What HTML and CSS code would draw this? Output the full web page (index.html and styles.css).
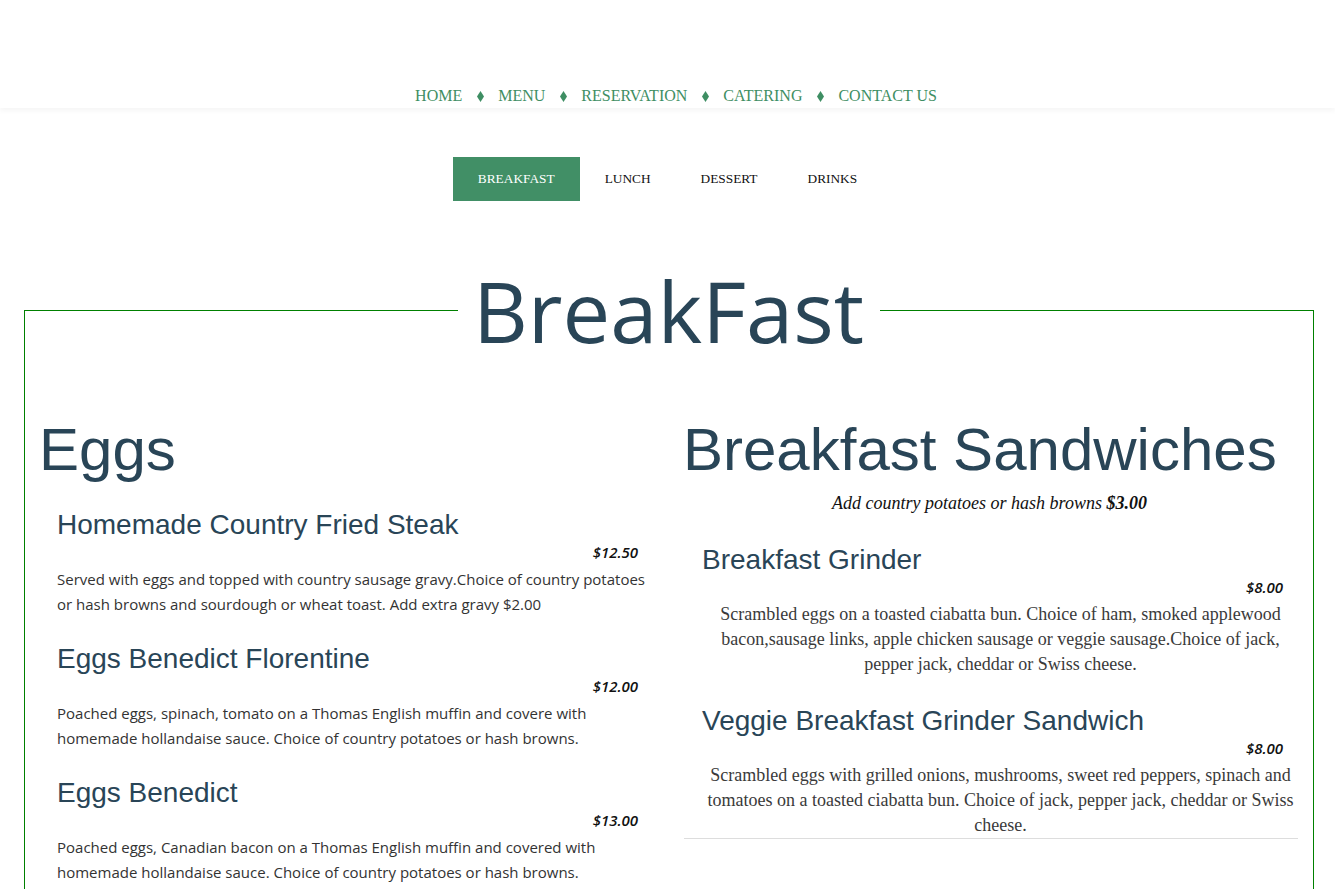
FILE: index.html
```html
<!DOCTYPE html>
<html lang="en">
<head>
<meta charset="utf-8">
<title>Menu - BreakFast</title>
<link rel="stylesheet" href="styles.css">
</head>
<body>
<header class="site-header">
  <nav class="main-nav">
    <a href="#" class="nav-link">HOME</a>
    <span class="nav-sep"><svg width="7" height="11" viewBox="0 0 7 11"><polygon points="3.5,0 7,5.5 3.5,11 0,5.5" fill="#3e8e63"/></svg></span>
    <a href="#" class="nav-link">MENU</a>
    <span class="nav-sep"><svg width="7" height="11" viewBox="0 0 7 11"><polygon points="3.5,0 7,5.5 3.5,11 0,5.5" fill="#3e8e63"/></svg></span>
    <a href="#" class="nav-link">RESERVATION</a>
    <span class="nav-sep"><svg width="7" height="11" viewBox="0 0 7 11"><polygon points="3.5,0 7,5.5 3.5,11 0,5.5" fill="#3e8e63"/></svg></span>
    <a href="#" class="nav-link">CATERING</a>
    <span class="nav-sep"><svg width="7" height="11" viewBox="0 0 7 11"><polygon points="3.5,0 7,5.5 3.5,11 0,5.5" fill="#3e8e63"/></svg></span>
    <a href="#" class="nav-link">CONTACT US</a>
  </nav>
</header>

<div class="tabs">
  <a href="#" class="tab active">BREAKFAST</a>
  <a href="#" class="tab">LUNCH</a>
  <a href="#" class="tab">DESSERT</a>
  <a href="#" class="tab">DRINKS</a>
</div>

<fieldset class="menu-box">
  <legend class="menu-title">BreakFast</legend>
  <div class="menu-cols">
    <section class="menu-col left">
      <h2 class="col-title">Eggs</h2>
      <div class="item first">
        <h3 class="item-name">Homemade Country Fried Steak</h3>
        <p class="price">$12.50</p>
        <p class="desc">Served with eggs and topped with country sausage gravy.Choice of country potatoes or hash browns and sourdough or wheat toast. Add extra gravy $2.00</p>
      </div>
      <div class="item">
        <h3 class="item-name">Eggs Benedict Florentine</h3>
        <p class="price">$12.00</p>
        <p class="desc">Poached eggs, spinach, tomato on a Thomas English muffin and covere with homemade hollandaise sauce. Choice of country potatoes or hash browns.</p>
      </div>
      <div class="item">
        <h3 class="item-name">Eggs Benedict</h3>
        <p class="price">$13.00</p>
        <p class="desc">Poached eggs, Canadian bacon on a Thomas English muffin and covered with homemade hollandaise sauce. Choice of country potatoes or hash browns.</p>
      </div>
    </section>
    <section class="menu-col right">
      <h2 class="col-title">Breakfast Sandwiches</h2>
      <p class="col-note">Add country potatoes or hash browns <b>$3.00</b></p>
      <div class="item">
        <h3 class="item-name">Breakfast Grinder</h3>
        <p class="price">$8.00</p>
        <p class="desc serif">Scrambled eggs on a toasted ciabatta bun. Choice of ham, smoked applewood bacon,sausage links, apple chicken sausage or veggie sausage.Choice of jack, pepper jack, cheddar or Swiss cheese.</p>
      </div>
      <div class="item">
        <h3 class="item-name">Veggie Breakfast Grinder Sandwich</h3>
        <p class="price">$8.00</p>
        <p class="desc serif">Scrambled eggs with grilled onions, mushrooms, sweet red peppers, spinach and tomatoes on a toasted ciabatta bun. Choice of jack, pepper jack, cheddar or Swiss cheese.</p>
      </div>
      <hr class="col-rule">
    </section>
  </div>
</fieldset>
</body>
</html>
```

FILE: styles.css
```css
html, body {
  margin: 0;
  padding: 0;
  background: #fff;
}

body {
  font-family: "Liberation Serif", "Times New Roman", serif;
  color: #333;
}

.site-header {
  height: 108px;
  box-sizing: border-box;
  padding-top: 84px;
  background: #fff;
  box-shadow: 0 3px 5px rgba(0, 0, 0, 0.04);
  position: relative;
}

.main-nav {
  display: flex;
  justify-content: center;
  align-items: center;
  height: 24px;
  padding-left: 17px;
}

.nav-link {
  font-family: "Liberation Serif", "Times New Roman", serif;
  font-size: 16px;
  line-height: 24px;
  color: #3e8e63;
  text-decoration: none;
}

.nav-sep {
  display: flex;
  align-items: center;
  margin: 0 14px 0 15px;
  padding-top: 1px;
}

.tabs {
  display: flex;
  justify-content: center;
  margin-top: 49px;
}

.tab {
  display: block;
  height: 44px;
  line-height: 44px;
  padding: 0 25px;
  font-family: "Liberation Serif", "Times New Roman", serif;
  font-size: 13.33px;
  color: #111;
  text-decoration: none;
}

.tab.active {
  background: #418f66;
  color: #fff;
}

.menu-box {
  margin: 51px 21px 0 24px;
  padding: 0 14px 80px 14px;
  border: 1px solid #008000;
  min-width: 0;
}

.menu-title {
  margin: 0 auto;
  padding: 0 16px 0 15px;
  font-family: "Open Sans", sans-serif;
  font-size: 85px;
  font-weight: 400;
  color: #294557;
  line-height: normal;
}

.menu-cols {
  display: grid;
  grid-template-columns: 1fr 1fr;
  column-gap: 22px;
  margin-top: 47px;
}

.col-title {
  margin: 0;
  font-family: "Liberation Sans", Arial, sans-serif;
  font-size: 60px;
  font-weight: 400;
  line-height: 69px;
  color: #294557;
}

.right .col-title {
  padding-left: 3px;
}

.col-note {
  margin: 7px 0 0;
  text-align: center;
  font-family: "Liberation Serif", "Times New Roman", serif;
  font-style: italic;
  font-size: 18px;
  line-height: 25px;
  color: #111;
}

.col-note b {
  font-weight: 700;
}

.item {
  margin-top: 28px;
}

.left .item {
  padding-left: 18px;
  margin-top: 26px;
}

.left .item.first {
  margin-top: 25px;
}

.right .item {
  padding-left: 22px;
}

.item-name {
  margin: 0;
  font-family: "Liberation Sans", Arial, sans-serif;
  font-size: 28px;
  font-weight: 400;
  line-height: 32px;
  color: #294557;
}

.price {
  margin: 1px 16px 0 0;
  text-align: right;
  font-family: "Open Sans", sans-serif;
  font-style: italic;
  font-weight: 600;
  font-size: 15px;
  line-height: 20px;
  color: #111;
}

.left .price {
  margin-right: 20px;
}

.desc {
  margin: 5px 0 0;
  font-family: "Open Sans", sans-serif;
  font-size: 15px;
  line-height: 25px;
  color: #333;
}

.desc.serif {
  font-family: "Liberation Serif", "Times New Roman", serif;
  font-size: 18px;
  text-align: center;
  color: #3a3a3a;
}

.col-rule {
  margin: 0 1px 0 4px;
  border: 0;
  border-top: 1px solid #ddd;
  height: 0;
}
```
